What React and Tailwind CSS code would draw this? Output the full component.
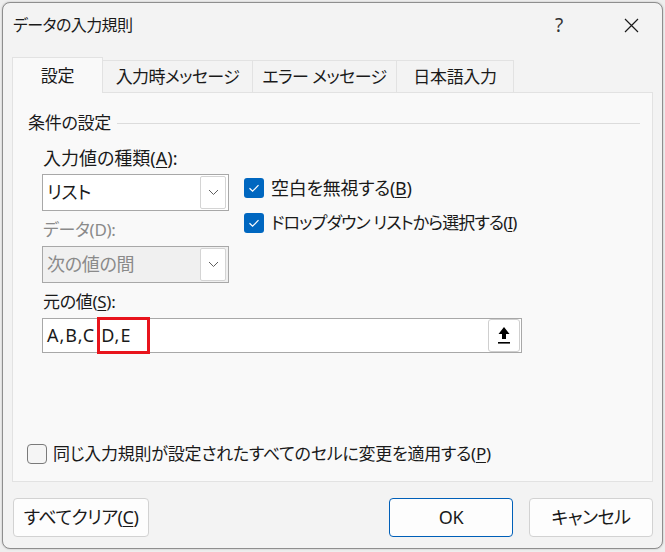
import React from "react";

const Chevron = () => (
  <svg width="11" height="7" viewBox="0 0 11 7" fill="none">
    <path d="M1 1 L5.5 5.5 L10 1" stroke="#5f5f5f" strokeWidth="1" />
  </svg>
);

const Check = () => (
  <svg width="20" height="20" viewBox="0 0 20 20" fill="none">
    <path d="M5.5 10.2 L8.6 13.2 L14.5 7.2" stroke="#ffffff" strokeWidth="1.2" />
  </svg>
);

const Select = ({ value, disabled }) => (
  <div
    className={
      "w-[187px] h-[37px] border border-[#a8a8a8] flex items-center pl-[4px] pr-[2px] " +
      (disabled ? "bg-[#f0f0f0] text-[#8a8a8a]" : "bg-white text-[#1a1a1a]")
    }
  >
    <span className="flex-1 text-[18px]">{value}</span>
    <div className="w-[26px] h-[33px] bg-white border border-[#d4d4d4] rounded-[2px] flex items-center justify-center">
      <Chevron />
    </div>
  </div>
);

const CheckRow = ({ children, textClass }) => (
  <div className="flex items-center h-[20px]">
    <div className="w-[20px] h-[20px] rounded-[3px] bg-[#0067c0] flex items-center justify-center">
      <Check />
    </div>
    <span className={"ml-[7px] leading-[24px] " + textClass}>{children}</span>
  </div>
);

const App = () => {
  return (
    <div className="w-[665px] h-[552px] bg-[#eeeeee] pt-[2px] pl-[2px] pr-[2px] pb-[3px] font-['Noto_Sans','Noto_Sans_CJK_JP',sans-serif] [font-feature-settings:'palt'] text-[17px] tracking-[-0.3px] text-[#1a1a1a]">
      <div className="h-full rounded-[8px] border border-[#8e8e8e] bg-[#f3f3f3] flex flex-col pl-[9px] pr-[9px] shadow-[0_0_2px_rgba(0,0,0,0.25)]">
        {/* title bar */}
        <div className="h-[42px] flex items-center pt-[2px]">
          <span className="text-[16px] tracking-[-0.6px] ml-[1px]">データの入力規則</span>
          <div className="ml-auto flex items-center">
            <div className="w-[44px] h-[32px] flex items-center justify-center text-[19px] text-[#333]">?</div>
            <div className="w-[28px]" />
            <div className="w-[44px] h-[32px] flex items-center justify-center">
              <svg width="15" height="15" viewBox="0 0 15 15" fill="none">
                <path d="M1 1 L14 14 M14 1 L1 14" stroke="#1a1a1a" strokeWidth="1.2" />
              </svg>
            </div>
          </div>
        </div>

        {/* tabs */}
        <div className="mt-[12px] flex items-end">
          <div className="relative z-10 -mb-px w-[91px] h-[36px] bg-[#f9f9f9] border-l border-t border-r border-[#e2e2e2] flex items-center justify-center">
            設定
          </div>
          <div className="w-[150px] h-[32px] border-t border-r border-[#e2e2e2] flex items-center justify-center tracking-[-0.6px]">
            入力時メッセージ
          </div>
          <div className="w-[144px] h-[32px] border-t border-r border-[#e2e2e2] flex items-center justify-center tracking-[-0.6px]">
            エラー メッセージ
          </div>
          <div className="w-[117px] h-[32px] border-t border-r border-[#e2e2e2] flex items-center justify-center">
            日本語入力
          </div>
        </div>

        {/* panel */}
        <div className="h-[390px] border border-[#e2e2e2] bg-[#f9f9f9] flex flex-col pt-[18px] pb-[15px]">
          <div className="h-[24px] flex items-center pl-[15px] pr-[12px]">
            <span>条件の設定</span>
            <div className="flex-1 h-px bg-[#dcdcdc] ml-[6px]" />
          </div>

          <div className="pl-[29px]">
            <div className="mt-[11px] h-[24px] leading-[24px] pl-[1px] text-[18px] tracking-normal">
              入力値の種類(<span className="underline underline-offset-2">A</span>):
            </div>
            <div className="flex">
              <div className="flex flex-col">
                <div className="mt-[4px]">
                  <Select value="リスト" />
                </div>
                <div className="mt-[7px] h-[24px] leading-[24px] pl-[1px] text-[#8a8a8a]">データ(D):</div>
                <div className="mt-[4px]">
                  <Select value="次の値の間" disabled />
                </div>
              </div>
              <div className="ml-[15px] mt-[4px] flex flex-col gap-[15px] pt-[4px]">
                <CheckRow textClass="text-[18px] tracking-[-0.3px]">
                  空白を無視する(<span className="underline underline-offset-2">B</span>)
                </CheckRow>
                <CheckRow textClass="tracking-[-0.9px]">
                  ドロップダウン リストから選択する(<span className="underline underline-offset-2">I</span>)
                </CheckRow>
              </div>
            </div>

            <div className="mt-[7px] h-[24px] leading-[24px] pl-[1px]">
              元の値(<span className="underline underline-offset-2">S</span>):
            </div>
            <div className="relative mt-[4px] w-[480px] h-[35px] bg-white border border-[#a8a8a8] flex items-center pl-[4px] pr-[1px]">
              <span className="flex-1 text-[18px] tracking-[1px]">
                A,B,C<span className="ml-[6px]">D,E</span>
              </span>
              <div className="w-[32px] h-[33px] bg-white border border-[#cfcfcf] rounded-[3px] flex items-center justify-center">
                <svg width="12" height="17" viewBox="0 0 12 17">
                  <path d="M6 0 L11.5 7 H8 V12 H4 V7 H0.5 Z" fill="#000" />
                  <rect x="0" y="15" width="12" height="1.6" fill="#000" />
                </svg>
              </div>
              <div className="absolute left-[54px] top-[-2px] w-[53px] h-[37px] border-[3px] border-[#e8141c]" />
            </div>
          </div>

          <div className="mt-auto h-[24px] flex items-center pl-[14px]">
            <div className="w-[20px] h-[20px] rounded-[4px] border border-[#7a7a7a] bg-[#f5f5f5]" />
            <span className="ml-[6px] tracking-[-0.25px]">
              同じ入力規則が設定されたすべてのセルに変更を適用する(<span className="underline underline-offset-2">P</span>)
            </span>
          </div>
        </div>

        {/* footer */}
        <div className="mt-[16px] flex items-center">
          <button className="w-[136px] h-[39px] ml-[1px] bg-[#fdfdfd] border border-[#d2d2d2] rounded-[4px] text-[18px] tracking-[-0.5px]">
            すべてクリア(<span className="underline underline-offset-2">C</span>)
          </button>
          <button className="ml-auto w-[124px] h-[39px] bg-[#fdfdfd] border border-[#005fb8] rounded-[4px] text-[18px]">
            OK
          </button>
          <button className="ml-[16px] w-[124px] h-[39px] bg-[#fdfdfd] border border-[#d2d2d2] rounded-[4px] text-[18px] tracking-[-0.5px]">
            キャンセル
          </button>
        </div>
      </div>
    </div>
  );
};

export default App;
